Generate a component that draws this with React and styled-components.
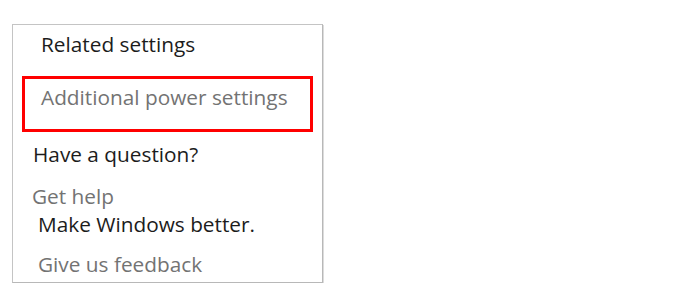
import React from "react";
import styled, { createGlobalStyle } from "styled-components";

const GlobalStyle = createGlobalStyle`
  html, body {
    margin: 0;
    padding: 0;
    background: #ffffff;
  }
  body {
    font-family: "Open Sans", "Noto Sans", sans-serif;
  }
`;

const Page = styled.div`
  padding: 24px 0 0 12px;
`;

const Panel = styled.div`
  box-sizing: border-box;
  width: 311px;
  height: 259px;
  border: 1px solid #c4c4c4;
  border-right-color: #b8b8b8;
  border-bottom-color: #b8b8b8;
  box-shadow: 1px 1px 0 #dcdcdc;
  display: flex;
  flex-direction: column;
`;

const Heading = styled.div`
  font-size: 20.8px;
  line-height: 24px;
  color: #1c1c1c;
  white-space: nowrap;
  margin-top: ${(p) => p.$top}px;
  padding-left: ${(p) => p.$indent}px;
`;

const Link = styled.div`
  font-size: 20.8px;
  line-height: 24px;
  color: #737373;
  white-space: nowrap;
  margin-top: ${(p) => p.$top || 0}px;
  padding-left: ${(p) => p.$indent}px;
`;

const Highlight = styled.div`
  box-sizing: border-box;
  width: 291px;
  height: 56px;
  margin: 20px 0 0 9px;
  border: 3px solid #ff0000;
  padding: 6px 0 0 16px;
`;

export default function App() {
  return (
    <>
      <GlobalStyle />
      <Page>
        <Panel>
          <Heading $top={7} $indent={28}>
            Related settings
          </Heading>
          <Highlight>
            <Link $indent={0}>Additional power settings</Link>
          </Highlight>
          <Heading $top={10} $indent={20}>
            Have a question?
          </Heading>
          <Link $top={18} $indent={19}>
            Get help
          </Link>
          <Heading $top={4} $indent={25}>
            Make Windows better.
          </Heading>
          <Link $top={16} $indent={25}>
            Give us feedback
          </Link>
        </Panel>
      </Page>
    </>
  );
}
